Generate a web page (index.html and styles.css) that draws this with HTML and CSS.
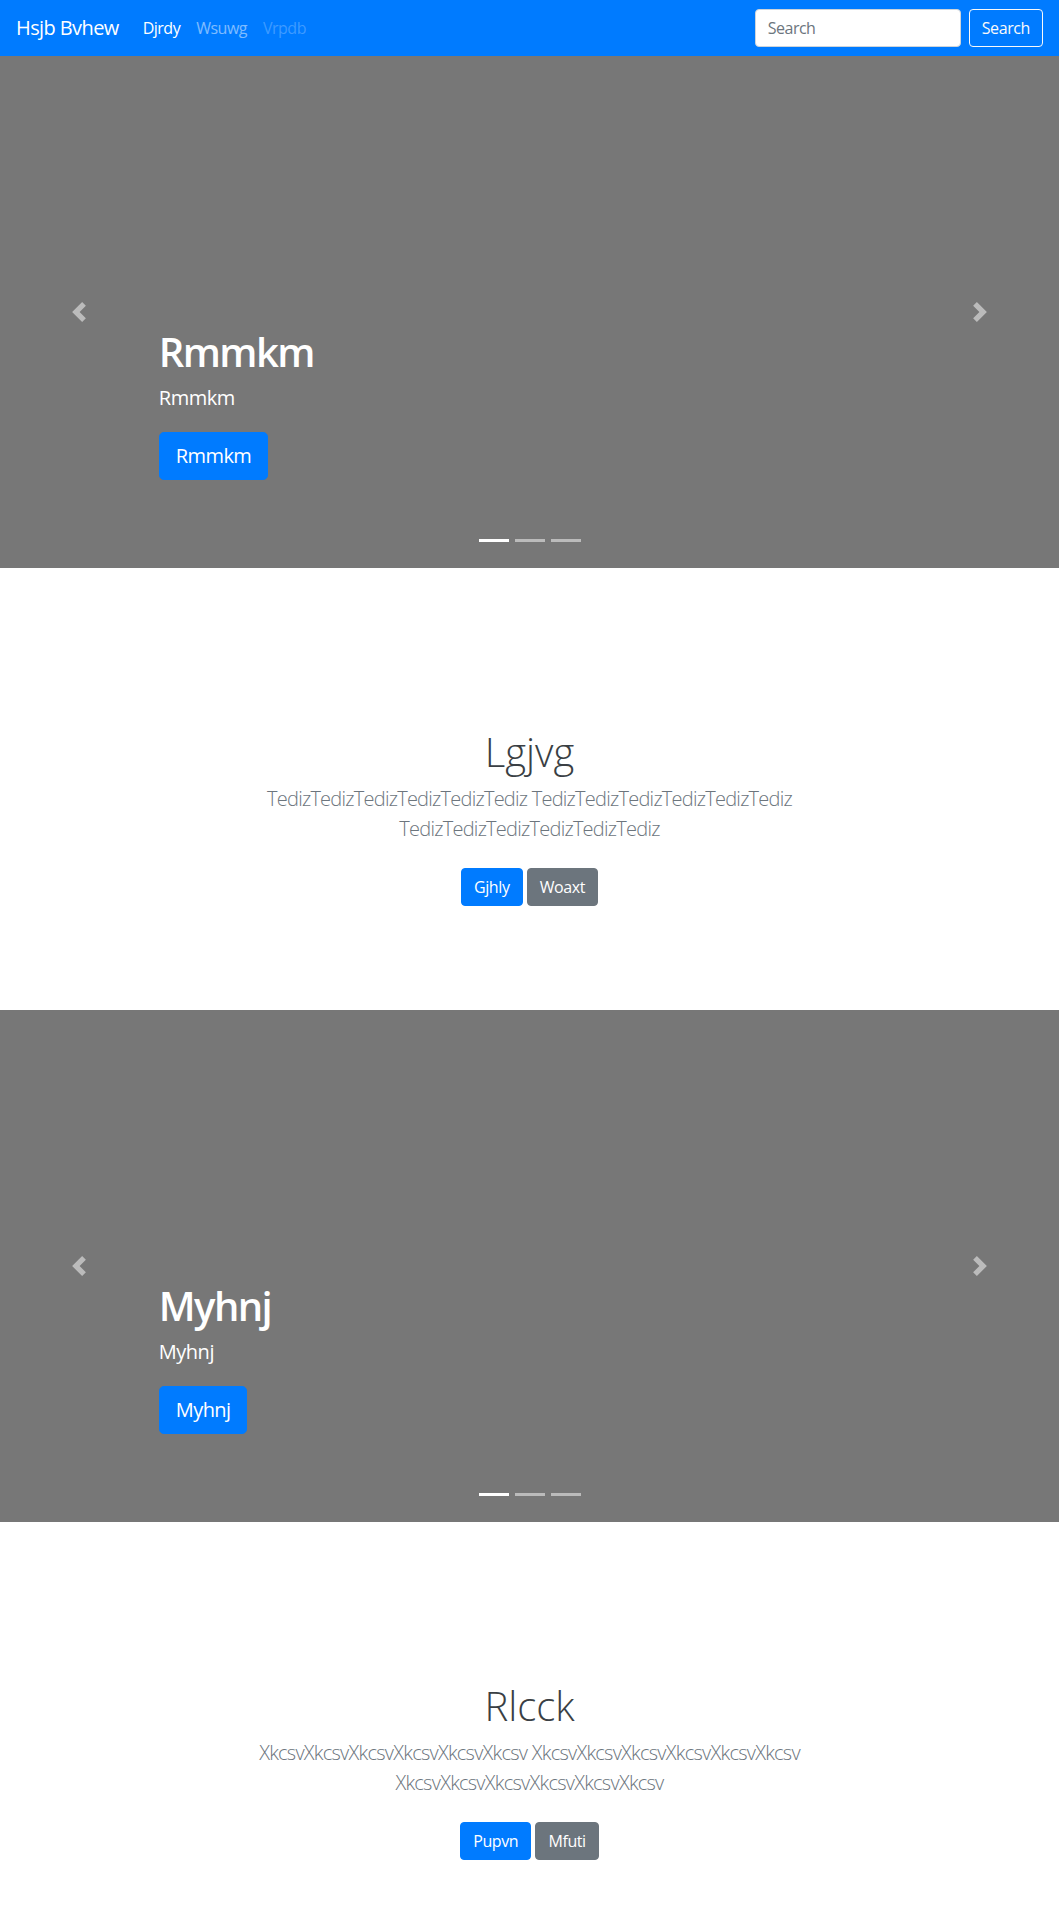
FILE: index.html
```
<!DOCTYPE html>
<html lang="en">
<head>
<meta charset="utf-8">
<title>Hsjb Bvhew</title>
<link rel="stylesheet" href="styles.css">
</head>
<body>
<header class="navbar">
  <a class="brand" href="#">Hsjb Bvhew</a>
  <ul class="nav">
    <li><a class="nav-link active" href="#">Djrdy</a></li>
    <li><a class="nav-link" href="#">Wsuwg</a></li>
    <li><a class="nav-link disabled" href="#">Vrpdb</a></li>
  </ul>
  <form class="search">
    <input class="search-input" type="text" placeholder="Search">
    <button class="btn btn-outline-light" type="button">Search</button>
  </form>
</header>
<main>
  <div class="carousel">
    <div class="carousel-item">
      <div class="caption">
        <h1>Rmmkm</h1>
        <p>Rmmkm</p>
        <p><a class="btn btn-lg btn-primary" href="#">Rmmkm</a></p>
      </div>
    </div>
    <ol class="indicators"><li class="active"></li><li></li><li></li></ol>
    <a class="control prev" href="#"><svg class="control-icon" viewBox="0 0 8 8"><path d="M5.25 0l-4 4 4 4 1.5-1.5L4.25 4l2.5-2.5L5.25 0z"/></svg></a>
    <a class="control next" href="#"><svg class="control-icon" viewBox="0 0 8 8"><path d="M2.75 0l-1.5 1.5L3.75 4l-2.5 2.5L2.75 8l4-4-4-4z"/></svg></a>
  </div>
  <section class="jumbotron">
    <div class="container">
      <h1 class="jumbotron-heading">Lgjvg</h1>
      <p class="lead">TedizTedizTedizTedizTedizTediz TedizTedizTedizTedizTedizTediz TedizTedizTedizTedizTedizTediz</p>
      <p class="actions"><a class="btn btn-primary" href="#">Gjhly</a> <a class="btn btn-secondary" href="#">Woaxt</a></p>
    </div>
  </section>
  <div class="carousel">
    <div class="carousel-item">
      <div class="caption">
        <h1>Myhnj</h1>
        <p>Myhnj</p>
        <p><a class="btn btn-lg btn-primary" href="#">Myhnj</a></p>
      </div>
    </div>
    <ol class="indicators"><li class="active"></li><li></li><li></li></ol>
    <a class="control prev" href="#"><svg class="control-icon" viewBox="0 0 8 8"><path d="M5.25 0l-4 4 4 4 1.5-1.5L4.25 4l2.5-2.5L5.25 0z"/></svg></a>
    <a class="control next" href="#"><svg class="control-icon" viewBox="0 0 8 8"><path d="M2.75 0l-1.5 1.5L3.75 4l-2.5 2.5L2.75 8l4-4-4-4z"/></svg></a>
  </div>
  <section class="jumbotron">
    <div class="container">
      <h1 class="jumbotron-heading">Rlcck</h1>
      <p class="lead">XkcsvXkcsvXkcsvXkcsvXkcsvXkcsv XkcsvXkcsvXkcsvXkcsvXkcsvXkcsv XkcsvXkcsvXkcsvXkcsvXkcsvXkcsv</p>
      <p class="actions"><a class="btn btn-primary" href="#">Pupvn</a> <a class="btn btn-secondary" href="#">Mfuti</a></p>
    </div>
  </section>
</main>
</body>
</html>
```
FILE: styles.css
```
* { box-sizing: border-box; }
html, body { margin: 0; padding: 0; }
body {
  font-family: "Segoe UI", "Open Sans", "Noto Sans", Arial, sans-serif;
  font-size: 16px;
  line-height: 1.5;
  color: #212529;
  background: #fff;
}
a { text-decoration: none; }
h1, p { margin: 0; }

.navbar {
  display: flex;
  align-items: center;
  height: 56px;
  padding: 8px 16px;
  background: #007bff;
  letter-spacing: -0.5px;
}
.brand {
  font-size: 20px;
  line-height: 30px;
  padding: 5px 0;
  margin-right: 16px;
  color: #fff;
  letter-spacing: -0.6px;
}
.nav {
  display: flex;
  list-style: none;
  margin: 0 auto 0 0;
  padding: 0;
}
.nav-link {
  display: block;
  padding: 8px;
  color: rgba(255,255,255,.5);
}
.nav-link.active { color: #fff; }
.nav-link.disabled { color: rgba(255,255,255,.25); }

.search { display: flex; align-items: center; }
.search-input {
  width: 206px;
  height: 38px;
  margin-right: 8px;
  padding: 6px 12px;
  font: inherit;
  font-size: 16px;
  letter-spacing: -0.5px;
  color: #495057;
  background: #fff;
  border: 1px solid #ced4da;
  border-radius: 4px;
}
.search-input::placeholder { color: #6c757d; }

.btn {
  display: inline-block;
  padding: 6px 12px;
  font-family: inherit;
  font-size: 16px;
  line-height: 24px;
  font-weight: 400;
  letter-spacing: -0.4px;
  text-align: center;
  vertical-align: middle;
  border: 1px solid transparent;
  border-radius: 4px;
  cursor: pointer;
}
.btn-lg {
  padding: 8px 16px;
  font-size: 20px;
  line-height: 30px;
  letter-spacing: -0.6px;
  border-radius: 4.8px;
}
.btn-outline-light { color: #f8f9fa; background: transparent; border-color: #f8f9fa; }
.btn-primary { color: #fff; background: #007bff; border-color: #007bff; }
.btn-secondary { color: #fff; background: #6c757d; border-color: #6c757d; }

.carousel {
  position: relative;
  margin-bottom: 64px;
}
.carousel-item {
  height: 512px;
  background: #777;
}
.caption {
  position: absolute;
  left: 15%;
  right: 15%;
  bottom: 48px;
  z-index: 10;
  padding: 20px 0;
  color: #fff;
  text-align: left;
}
.caption h1 {
  font-size: 40px;
  line-height: 48px;
  font-weight: 600;
  letter-spacing: -1.6px;
  margin-bottom: 8px;
}
.caption p {
  font-size: 20px;
  line-height: 28px;
  letter-spacing: -0.5px;
  margin-bottom: 20px;
}
.indicators {
  position: absolute;
  left: 0;
  right: 0;
  bottom: 0;
  z-index: 15;
  display: flex;
  justify-content: center;
  margin: 0 15% 16px;
  padding: 0;
  list-style: none;
}
.indicators li {
  box-sizing: content-box;
  width: 30px;
  height: 3px;
  margin: 0 3px;
  background: #fff;
  background-clip: padding-box;
  border-top: 10px solid transparent;
  border-bottom: 10px solid transparent;
  opacity: .5;
}
.indicators li.active { opacity: 1; }
.control {
  position: absolute;
  top: 0;
  bottom: 0;
  z-index: 1;
  width: 15%;
  display: flex;
  align-items: center;
  justify-content: center;
  opacity: .5;
}
.control.prev { left: 0; }
.control.next { right: 0; }
.control-icon { width: 20px; height: 20px; fill: #fff; }

.jumbotron {
  padding: 96px 0;
  background: #fff;
  text-align: center;
}
.container {
  max-width: 640px;
  margin: 0 auto;
  padding: 0 15px;
}
.jumbotron-heading {
  font-size: 40px;
  line-height: 48px;
  font-weight: 300;
  color: #3a3f44;
  margin-bottom: 8px;
}
.lead {
  font-size: 20px;
  line-height: 30px;
  font-weight: 300;
  letter-spacing: -0.75px;
  color: #6c757d;
  margin-bottom: 16px;
}
.actions .btn { margin: 8px 0; }
```
